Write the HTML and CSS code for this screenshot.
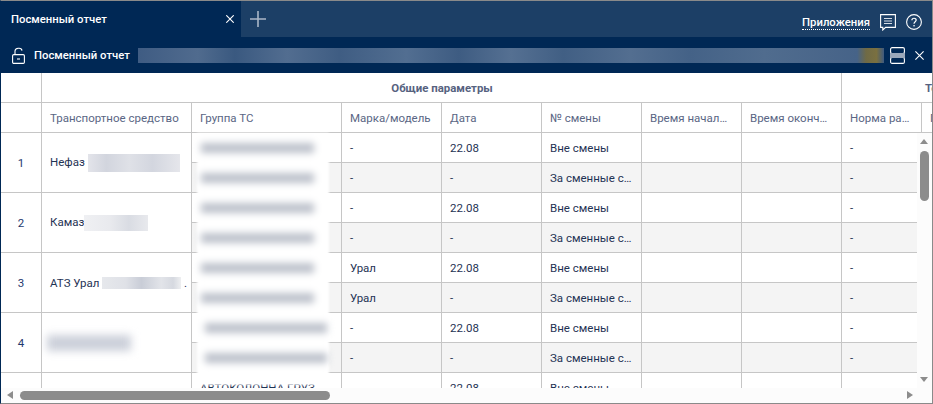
FILE: index.html
```html
<!DOCTYPE html>
<html lang="ru">
<head>
<meta charset="utf-8">
<title>Посменный отчет</title>
<link rel="stylesheet" href="styles.css">
</head>
<body>
<div class="window">
  <header class="tabbar">
    <div class="tab">
      <span class="tab-title">Посменный отчет</span>
      <svg class="tab-close" width="8" height="8" viewBox="0 0 8 8"><path d="M0.3 0.3L7.7 7.7M7.7 0.3L0.3 7.7" stroke="#fff" stroke-width="1.1" fill="none"/></svg>
    </div>
    <svg class="tab-add" width="16" height="16" viewBox="0 0 16 16"><path d="M8 0V16M0 8H16" stroke="#aab7c7" stroke-width="1.6" fill="none"/></svg>
    <div class="tabbar-right">
      <span class="apps">Приложения</span>
      <svg class="msg" width="16" height="17" viewBox="0 0 16 17"><path d="M0.6 0.6H15.4V13.4H5.6L2.8 16V13.4H0.6Z" stroke="#fff" stroke-width="1.1" fill="none"/><path d="M4 4.5H12M4 7H12M4 9.5H12" stroke="#d5dce5" stroke-width="1" fill="none"/></svg>
      <svg class="help" width="16" height="16" viewBox="0 0 16 16"><circle cx="8" cy="8" r="7.4" stroke="#fff" stroke-width="1.1" fill="none"/><path d="M5.9 6.2C5.9 3.6 10.2 3.6 10.2 6.1C10.2 7.8 8 7.7 8 9.8" stroke="#fff" stroke-width="1.2" fill="none"/><rect x="7.4" y="11" width="1.3" height="1.4" fill="#fff"/></svg>
    </div>
  </header>
  <div class="subbar">
    <svg class="lock" width="13" height="17" viewBox="0 0 13 17"><path d="M3 7V4C3 1 9.6 0 10 3.6" stroke="#fff" stroke-width="1.1" fill="none"/><rect x="0.6" y="7.6" width="11.8" height="8.8" rx="1.2" stroke="#fff" stroke-width="1.1" fill="none"/><path d="M5 12H8" stroke="#fff" stroke-width="1.1"/></svg>
    <span class="sub-title">Посменный отчет</span>
    <div class="sub-mask"></div>
    <svg class="split" width="15" height="17" viewBox="0 0 15 17"><rect x="0.6" y="0.6" width="13.8" height="6" rx="1.5" stroke="#fff" stroke-width="1.1" fill="none"/><rect x="0.6" y="10.4" width="13.8" height="6" rx="1.5" stroke="#fff" stroke-width="1.1" fill="none"/><rect x="0" y="6" width="15" height="5" fill="#9aa8bb"/></svg>
    <svg class="sub-close" width="9" height="9" viewBox="0 0 9 9"><path d="M0.4 0.4L8.6 8.6M8.6 0.4L0.4 8.6" stroke="#fff" stroke-width="1.1" fill="none"/></svg>
  </div>
  <main class="content">
    <div class="grid-clip">
      <table class="grid">
        <colgroup>
          <col class="c-num"><col class="c-wide"><col class="c-wide"><col class="c-std"><col class="c-std"><col class="c-std"><col class="c-std"><col class="c-std"><col class="c-norm"><col class="c-std">
        </colgroup>
        <thead>
          <tr>
            <th class="head-blank"></th>
            <th class="group" colspan="7">Общие параметры</th>
            <th class="group group-next" colspan="2">Топливо</th>
          </tr>
          <tr>
            <th class="head-blank"></th>
            <th class="col">Транспортное средство</th>
            <th class="col">Группа ТС</th>
            <th class="col">Марка/модель</th>
            <th class="col">Дата</th>
            <th class="col">№ смены</th>
            <th class="col">Время начала смены</th>
            <th class="col">Время окончания смены</th>
            <th class="col">Норма расхода</th>
            <th class="col">Пробег</th>
          </tr>
        </thead>
        <tbody>
          <tr><td class="num" rowspan="2">1</td><td class="veh" rowspan="2">Нефаз <span class="mask mask-a"></span></td><td></td><td>-</td><td>22.08</td><td>Вне смены</td><td></td><td></td><td>-</td><td></td></tr>
          <tr class="alt"><td></td><td>-</td><td>-</td><td>За сменные сутки</td><td></td><td></td><td>-</td><td></td></tr>
          <tr><td class="num" rowspan="2">2</td><td class="veh" rowspan="2">Камаз<span class="mask mask-b"></span></td><td></td><td>-</td><td>22.08</td><td>Вне смены</td><td></td><td></td><td>-</td><td></td></tr>
          <tr class="alt"><td></td><td>-</td><td>-</td><td>За сменные сутки</td><td></td><td></td><td>-</td><td></td></tr>
          <tr><td class="num" rowspan="2">3</td><td class="veh" rowspan="2">АТЗ Урал <span class="mask mask-c"></span> .</td><td></td><td>Урал</td><td>22.08</td><td>Вне смены</td><td></td><td></td><td>-</td><td></td></tr>
          <tr class="alt"><td></td><td>Урал</td><td>-</td><td>За сменные сутки</td><td></td><td></td><td>-</td><td></td></tr>
          <tr><td class="num" rowspan="2">4</td><td class="veh veh-masked" rowspan="2"><span class="mask mask-d"></span></td><td></td><td>-</td><td>22.08</td><td>Вне смены</td><td></td><td></td><td>-</td><td></td></tr>
          <tr class="alt"><td></td><td>-</td><td>-</td><td>За сменные сутки</td><td></td><td></td><td>-</td><td></td></tr>
          <tr><td class="num" rowspan="2">5</td><td class="veh" rowspan="2"></td><td>АВТОКОЛОННА ГРУЗ</td><td>-</td><td>22.08</td><td>Вне смены</td><td></td><td></td><td>-</td><td></td></tr>
          <tr class="alt"><td></td><td>-</td><td>-</td><td>За сменные сутки</td><td></td><td></td><td>-</td><td></td></tr>
        </tbody>
      </table>
      <div class="group-mask">
        <span class="bl"></span><span class="bl"></span><span class="bl"></span><span class="bl"></span><span class="bl"></span><span class="bl"></span><span class="bl bl-long"></span><span class="bl bl-long"></span>
      </div>
      <div class="vscroll">
        <span class="arrow arrow-up"></span>
        <span class="vthumb"></span>
        <span class="arrow arrow-down"></span>
      </div>
    </div>
    <div class="hscroll">
      <span class="arrow arrow-left"></span>
      <span class="hthumb"></span>
      <span class="arrow arrow-right"></span>
    </div>
  </main>
</div>
</body>
</html>
```
FILE: styles.css
```css
* { box-sizing: border-box; }
html, body { margin: 0; padding: 0; background: #fff; }
body { font-family: Roboto, "Liberation Sans", sans-serif; font-size: 11.5px; }

.window {
  width: 933px;
  height: 404px;
  display: flex;
  flex-direction: column;
  border-top: 1px solid #8a8a8a;
  border-right: 1px solid #8a8a8a;
  border-bottom: 1px solid #8a8a8a;
  border-left: 1px solid #002855;
  overflow: hidden;
}

.tabbar {
  height: 36px;
  flex: none;
  display: flex;
  align-items: center;
  background: #1c3f66;
}
.tab {
  width: 240px;
  height: 36px;
  display: flex;
  align-items: center;
  justify-content: space-between;
  padding: 0 7px 0 10px;
  background: #002855;
}
.tab-title { color: #fff; font-weight: 500; font-size: 11.3px; }
.tab-add { margin-left: 9px; }
.tabbar-right {
  margin-left: auto;
  display: flex;
  align-items: center;
  padding: 6px 10px 0 0;
}
.apps {
  color: #fff;
  font-weight: 500;
  font-size: 11.3px;
  border-bottom: 1px dotted #fff;
  line-height: 13px;
  margin-top: 2px;
}
.msg { margin-left: 10px; }
.help { margin-left: 10px; }

.subbar {
  height: 36px;
  flex: none;
  display: flex;
  align-items: center;
  background: #002855;
}
.lock { margin-left: 11px; }
.sub-title { width: 96px; color: #fff; font-weight: 500; font-size: 11.3px; margin-left: 9px; white-space: nowrap; }
.sub-mask {
  width: 746px;
  height: 15px;
  margin-left: 8px;
  margin-top: 1px;
  background: linear-gradient(90deg, #3f5c83 0, #506b8e 8%, #3a5980 13%, #526d90 20%, #3f5d83 27%, #526e91 36%, #3e5c82 43%, #557092 50%, #415f84 57%, #536e90 66%, #446287 74%, #506c8e 84%, #466388 96.4%, #6f6a45 97.6%, #7a7040 99%, #3f5a7f 100%);
}
.split { margin-left: 6px; }
.sub-close { margin-left: 10px; }

.content {
  flex: 1;
  min-height: 0;
  display: flex;
  flex-direction: column;
}
.grid-clip {
  position: relative;
  height: 315px;
  flex: none;
  overflow: hidden;
}
.grid {
  table-layout: fixed;
  border-collapse: separate;
  border-spacing: 0;
  width: 1021px;
}
.c-num { width: 41px; }
.c-wide { width: 150px; }
.c-std { width: 100px; }
.c-norm { width: 80px; }

.grid th, .grid td {
  height: 30px;
  padding: 0 7px 0 8px;
  border-right: 1px solid #c6c6c6;
  border-bottom: 1px solid #c6c6c6;
  white-space: nowrap;
  overflow: hidden;
  text-overflow: ellipsis;
  font-weight: 400;
  text-align: left;
}
.grid th.col { color: #5a6684; padding-right: 10px; }
.grid th.group {
  font-weight: 700;
  font-size: 11.4px;
  text-align: center;
  color: #56627f;
}
.grid th.group-next {
  text-align: left;
  padding-left: 83px;
}
.grid td { color: #1f3354; }
.grid tr.alt td { background: #f4f4f4; }
.grid td.num, .grid td.veh { background: #fff; }
.grid td.num { text-align: center; padding: 0; color: #1f3a6e; }
.grid td.veh { text-overflow: clip; padding-right: 0; }
.grid td.veh-masked { padding-left: 5px; }

.mask { display: inline-block; vertical-align: middle; }
.mask-a { width: 92px; height: 18px; background: linear-gradient(90deg, #e3e4ea, #d2d5de 20%, #dfe1e7 45%, #d3d6df 70%, #e5e6eb); }
.mask-b { width: 64px; height: 16px; background: linear-gradient(90deg, #eff0f3, #e9eaee 40%, #d9dce3 70%, #e8e9ed); }
.mask-c { width: 79px; height: 12px; background: linear-gradient(90deg, #e6e8ec, #dfe1e7 30%, #c9cdd7 50%, #e2e4e9 75%, #d6d9e0 90%, #eeeff1); }
.mask-d { width: 84px; height: 16px; background: #ccd0da; filter: blur(4px); }

.group-mask {
  position: absolute;
  left: 196px;
  top: 60px;
  width: 132px;
  height: 252px;
  padding: 10px 0 0 4px;
  display: flex;
  flex-direction: column;
  gap: 20px;
  background: #fff;
  filter: blur(1px);
}
.bl {
  display: block;
  flex: none;
  width: 113px;
  height: 10px;
  background: #bcc1cb;
  filter: blur(3.5px);
}
.bl-long { width: 122px; margin-left: 4px; }

.vscroll {
  position: absolute;
  right: 0;
  top: 60px;
  bottom: 0;
  width: 15px;
  background: #fcfcfc;
}
.vthumb {
  position: absolute;
  left: 3px;
  top: 18px;
  width: 9px;
  height: 50px;
  border-radius: 5px;
  background: #8c8c8c;
}
.arrow { position: absolute; width: 0; height: 0; }
.arrow-up {
  left: 3px;
  top: 6px;
  border-left: 4.5px solid transparent;
  border-right: 4.5px solid transparent;
  border-bottom: 5px solid #8c8c8c;
}
.arrow-down {
  left: 3px;
  bottom: 6px;
  border-left: 4.5px solid transparent;
  border-right: 4.5px solid transparent;
  border-top: 5px solid #8c8c8c;
}

.hscroll {
  position: relative;
  flex: 1;
  background: #fcfcfc;
}
.hthumb {
  position: absolute;
  left: 19px;
  top: 3px;
  width: 310px;
  height: 9px;
  border-radius: 5px;
  background: #8c8c8c;
}
.arrow-left {
  left: 6px;
  top: 3px;
  border-top: 4.5px solid transparent;
  border-bottom: 4.5px solid transparent;
  border-right: 6px solid #8c8c8c;
}
.arrow-right {
  left: 906px;
  top: 3px;
  border-top: 4.5px solid transparent;
  border-bottom: 4.5px solid transparent;
  border-left: 6px solid #8c8c8c;
}
```
